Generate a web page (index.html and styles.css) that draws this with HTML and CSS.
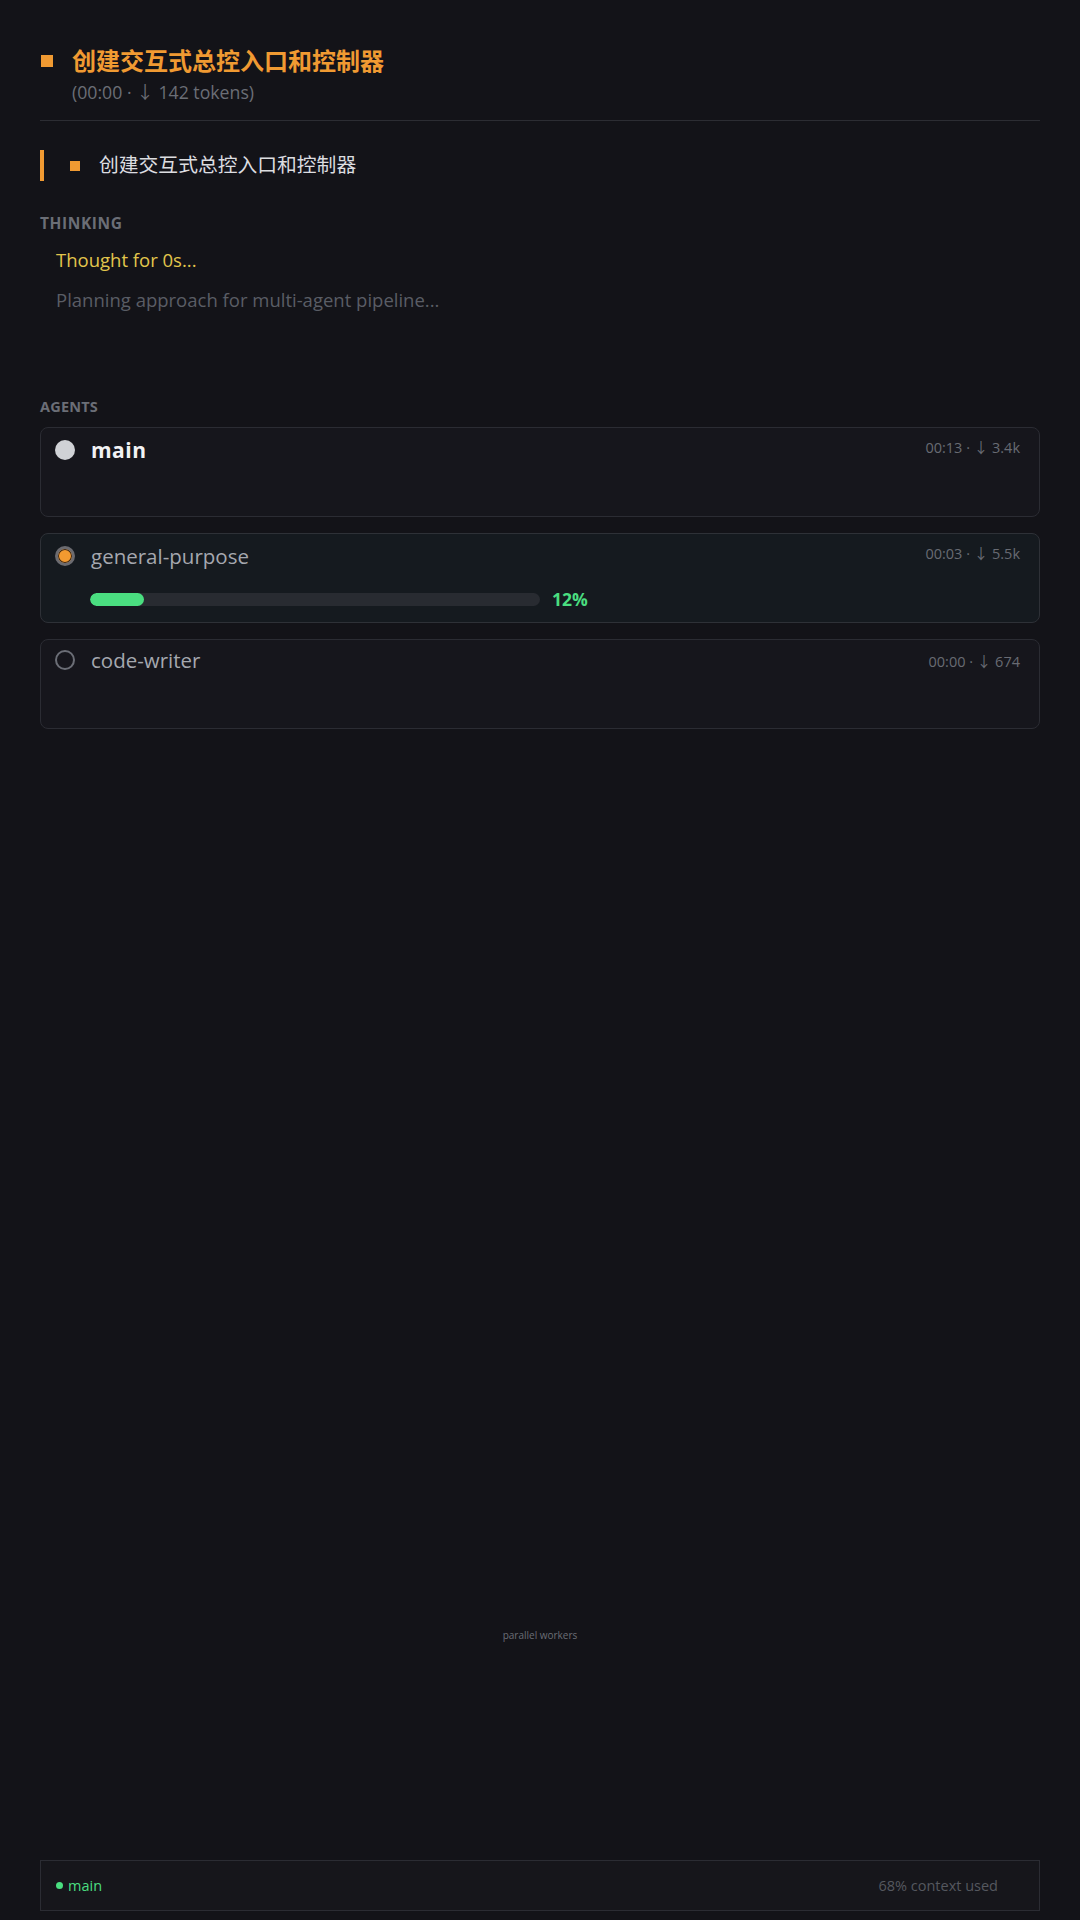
FILE: index.html
```html
<!DOCTYPE html>
<html lang="zh-CN">
<head>
    <meta charset="UTF-8">
    <meta name="viewport" content="width=device-width, initial-scale=1.0">
    <title>Agents</title>
    <link rel="stylesheet" href="styles.css">
</head>
<body>
    <header class="task-header">
        <span class="task-mark"></span>
        <div class="task-info">
            <h1 class="task-title">创建交互式总控入口和控制器</h1>
            <div class="task-meta">(00:00 · ↓ 142 tokens)</div>
        </div>
    </header>

    <div class="quote">
        <span class="quote-mark"></span>
        <span class="quote-text">创建交互式总控入口和控制器</span>
    </div>

    <section class="thinking">
        <h2 class="section-label label-thinking">THINKING</h2>
        <p class="thought">Thought for 0s...</p>
        <p class="plan">Planning approach for multi-agent pipeline...</p>
    </section>

    <section class="agents">
        <h2 class="section-label">AGENTS</h2>

        <div class="agent-card">
            <div class="agent-row">
                <span class="status status-done"></span>
                <span class="agent-name agent-name-main">main</span>
                <span class="agent-stats">00:13 · ↓ 3.4k</span>
            </div>
        </div>

        <div class="agent-card agent-card-active">
            <div class="agent-row">
                <span class="status status-running"></span>
                <span class="agent-name">general-purpose</span>
                <span class="agent-stats">00:03 · ↓ 5.5k</span>
            </div>
            <div class="progress">
                <div class="progress-track">
                    <div class="progress-fill" style="width: 12%"></div>
                </div>
                <span class="progress-value">12%</span>
            </div>
        </div>

        <div class="agent-card agent-card-idle">
            <div class="agent-row">
                <span class="status status-idle"></span>
                <span class="agent-name">code-writer</span>
                <span class="agent-stats">00:00 · ↓ 674</span>
            </div>
        </div>
    </section>

    <div class="workspace">
        <span class="workspace-label">parallel workers</span>
    </div>

    <footer class="status-bar">
        <span class="status-agent"><span class="status-dot"></span>main</span>
        <span class="status-context">68% context used</span>
    </footer>
</body>
</html>
```

FILE: styles.css
```css
* {
    box-sizing: border-box;
    margin: 0;
    padding: 0;
}

html, body {
    height: 100%;
}

body {
    display: flex;
    flex-direction: column;
    min-height: 1920px;
    padding: 0 40px 9px;
    background-color: #131318;
    color: #d8d9dd;
    font-family: "Open Sans", "Noto Sans CJK SC", sans-serif;
}

/* header */
.task-header {
    display: flex;
    align-items: flex-start;
    padding: 43px 0 16px 1px;
    border-bottom: 1px solid #2c2d33;
}

.task-mark {
    width: 12px;
    height: 12px;
    margin: 12px 19px 0 0;
    background: #f09a32;
}

.task-title {
    font-family: "Noto Sans CJK SC", sans-serif;
    font-size: 24px;
    line-height: 34px;
    font-weight: 700;
    color: #f09a32;
}

.task-meta {
    margin-top: 3px;
    font-size: 17.7px;
    line-height: 24px;
    color: #6b6e76;
}

/* quoted step */
.quote {
    display: flex;
    align-items: center;
    height: 31px;
    margin-top: 29px;
    padding-left: 26px;
    border-left: 4px solid #f09a32;
}

.quote-mark {
    width: 10px;
    height: 10px;
    margin-right: 19px;
    background: #f09a32;
}

.quote-text {
    margin-bottom: 4px;
    font-family: "Noto Sans CJK SC", sans-serif;
    font-size: 19.8px;
    color: #dcdde0;
}

.section-label {
    font-size: 14.5px;
    line-height: 20px;
    font-weight: 700;
    color: #6b6e76;
    letter-spacing: 0.2px;
}

.label-thinking {
    font-size: 15.5px;
    letter-spacing: 0.6px;
}

/* thinking */
.thinking {
    margin-top: 32px;
}

.thinking p {
    padding-left: 16px;
    font-size: 18.5px;
    line-height: 24px;
}

.thought {
    margin-top: 15px;
    color: #e2c64c;
}

.plan {
    margin-top: 16px;
    color: #5a5d65;
}

/* agents */
.agents {
    display: flex;
    flex-direction: column;
    gap: 16px;
    margin-top: 85px;
}

.agents .section-label {
    margin-bottom: -6px;
}

.agent-card {
    height: 90px;
    padding: 9px 19px 0 14px;
    background: #16161c;
    border: 1px solid #2b2c33;
    border-radius: 8px;
}

.agent-card-active {
    background: #151a1f;
    border-color: #2e3137;
}

.agent-card-idle {
    padding-top: 7px;
}

.agent-row {
    display: flex;
    align-items: center;
}

.status {
    width: 20px;
    height: 20px;
    border-radius: 50%;
    margin-right: 16px;
    flex-shrink: 0;
}

.status-done {
    background: #d0d2d6;
}

.status-running {
    background: #f39a30;
    border: 3px solid #6b6b70;
    box-shadow: inset 0 0 0 1px #3a2410;
}

.status-idle {
    border: 2px solid #6b6e76;
}

.agent-name {
    flex: 1;
    font-size: 20.5px;
    line-height: 26px;
    color: #a5a8af;
}

.agent-name-main {
    font-size: 21px;
    font-weight: 700;
    letter-spacing: 0.5px;
    color: #f2f2f4;
}

.agent-stats {
    align-self: flex-start;
    margin-top: 1px;
    font-size: 14.5px;
    line-height: 20px;
    color: #686b73;
}

.agent-card-idle .agent-stats {
    margin-top: 5px;
}

.progress {
    display: flex;
    align-items: center;
    gap: 12px;
    margin: 18px 0 0 35px;
}

.progress-track {
    width: 450px;
    height: 13px;
    border-radius: 7px;
    background: #282b31;
    overflow: hidden;
}

.progress-fill {
    height: 100%;
    border-radius: 7px;
    background: #4ade80;
}

.progress-value {
    font-size: 17.5px;
    font-weight: 700;
    color: #4ade80;
}

/* empty canvas */
.workspace {
    flex: 1;
    display: flex;
    align-items: flex-end;
    justify-content: center;
    padding-bottom: 218px;
}

.workspace-label {
    font-size: 10px;
    line-height: 14px;
    color: #6b6e76;
}

/* bottom status bar */
.status-bar {
    display: flex;
    align-items: center;
    justify-content: space-between;
    height: 51px;
    padding: 0 41px 0 15px;
    background: #16161b;
    border: 1px solid #2b2c33;
}

.status-agent {
    display: flex;
    align-items: center;
    gap: 5px;
    font-size: 14.5px;
    color: #4ade80;
}

.status-dot {
    width: 7px;
    height: 7px;
    border-radius: 50%;
    background: #4ade80;
}

.status-context {
    font-size: 14.5px;
    color: #55585f;
}
```
